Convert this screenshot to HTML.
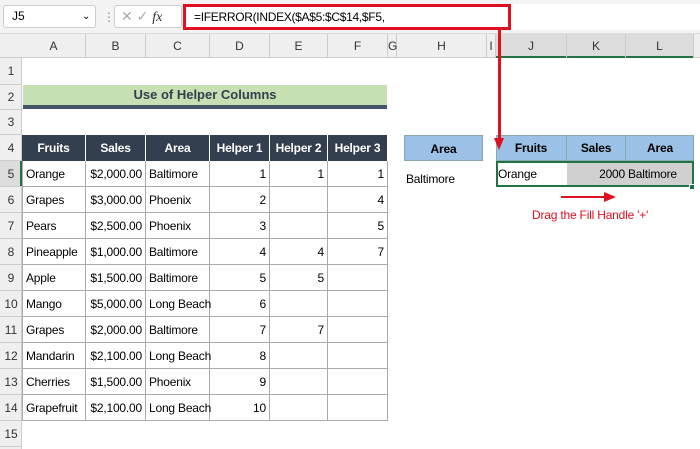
<!DOCTYPE html><html><head><style>
body{margin:0;width:700px;height:449px;overflow:hidden;background:#fff;font-family:"Liberation Sans",sans-serif;position:relative}
.a{position:absolute;box-sizing:border-box}
.t{font-size:12px;line-height:26px;white-space:nowrap;letter-spacing:-0.2px}
</style></head><body>
<div class="a" style="left:0;top:0;width:700px;height:34px;background:#f3f3f3;border-bottom:1px solid #ddd"></div>
<div class="a" style="left:3px;top:5px;width:93px;height:23px;background:#fff;border:1px solid #ccc;border-radius:3px;font-size:12px;line-height:21px;padding-left:8px">J5<span style="position:absolute;left:78px;font-size:10px">&#8964;</span></div>
<div class="a" style="left:103px;top:10px;font-size:12px;color:#888">⋮</div>
<div class="a" style="left:114px;top:5px;width:68px;height:23px;background:#fff;border:1px solid #ccc;border-radius:3px;font-size:14px;line-height:21px;color:#aaa;padding-left:6px">✕ ✓ <i style="color:#333;font-family:'Liberation Serif'">fx</i></div>
<div class="a" style="left:183px;top:4px;width:517px;height:26px;background:#fff"></div>
<div class="a" style="left:183px;top:4px;width:328px;height:26px;border:3px solid #e01020;font-size:12px;line-height:20px;padding-left:8px;letter-spacing:-0.3px">=IFERROR(INDEX($A$5:$C$14,$F5,</div>
<div class="a" style="left:0;top:34px;width:700px;height:24px;background:#efefef;border-bottom:1px solid #ccc"></div>
<div class="a" style="left:496px;top:56px;width:198px;height:2px;background:#217346"></div>
<div class="a" style="left:496px;top:34px;width:198px;height:22px;background:#dcdcdc"></div>
<div class="a" style="left:0;top:58px;width:22px;height:391px;background:#efefef;border-right:1px solid #ccc"></div>
<div class="a" style="left:0;top:161px;width:22px;height:26px;background:#dcdcdc;border-right:2px solid #217346"></div>
<div id="g"></div>
<div class="a" style="left:23px;top:85px;width:364px;height:20px;background:#c6e0b4;text-align:center;font-weight:bold;font-size:13px;line-height:20px;color:#333f4f">Use of Helper Columns</div>
<div class="a" style="left:23px;top:105px;width:364px;height:4px;background:#44546a"></div>
<div id="tb"></div>
<div class="a" style="left:404px;top:135px;width:79px;height:26px;background:#9bc2e6;border:1px solid #8aa;text-align:center;font-weight:bold" ><span class="t">Area</span></div>
<div class="a t" style="left:406px;top:166px">Baltimore</div>
<div class="a" style="left:496px;top:135px;width:198px;height:26px;background:#9bc2e6;border:1px solid #8aa"></div>
<div class="a t" style="left:496px;top:135px;width:71px;text-align:center;font-weight:bold;border-right:1px solid #8aa">Fruits</div>
<div class="a t" style="left:567px;top:135px;width:59px;text-align:center;font-weight:bold;border-right:1px solid #8aa">Sales</div>
<div class="a t" style="left:626px;top:135px;width:68px;text-align:center;font-weight:bold">Area</div>
<div class="a" style="left:567px;top:161px;width:126px;height:26px;background:#d0d0d0"></div>
<div class="a t" style="left:498px;top:161px">Orange</div>
<div class="a t" style="left:567px;top:161px;width:58px;text-align:right">2000</div>
<div class="a t" style="left:628px;top:161px">Baltimore</div>
<div class="a" style="left:496px;top:161px;width:198px;height:26px;border:2px solid #217346"></div>
<div class="a" style="left:689px;top:184px;width:6px;height:6px;background:#217346;border:1px solid #fff"></div>
<div class="a" style="left:498px;top:30px;width:3px;height:110px;background:#e01020"></div>
<div class="a" style="left:494px;top:138px;width:0;height:0;border-left:5px solid transparent;border-right:5px solid transparent;border-top:12px solid #e01020"></div>
<div class="a" style="left:561px;top:196px;width:45px;height:2px;background:#e01020"></div>
<div class="a" style="left:604px;top:192px;width:0;height:0;border-top:5px solid transparent;border-bottom:5px solid transparent;border-left:12px solid #e01020"></div>
<div class="a t" style="left:532px;top:202px;color:#e01020">Drag the Fill Handle '+'</div>
<script>
var cols=[["A",22,86],["B",86,146],["C",146,210],["D",210,270],["E",270,328],["F",328,388],["G",388,397],["H",397,487],["I",487,496],["J",496,567],["K",567,626],["L",626,694]];
var rows=[[1,58,85],[2,85,110],[3,110,135]];for(var r=4;r<=15;r++)rows.push([r,135+(r-4)*26,161+(r-4)*26]);
var h="";
cols.forEach(c=>{h+=`<div class="a" style="left:${c[1]}px;top:34px;width:${c[2]-c[1]}px;height:24px;border-right:1px solid #ccc;text-align:center;font-size:12px;line-height:24px;color:#333">${c[0]}</div>`;});
rows.forEach(r=>{h+=`<div class="a" style="left:0;top:${r[1]}px;width:22px;height:${r[2]-r[1]}px;border-bottom:1px solid #ccc;text-align:center;font-size:12px;line-height:${r[2]-r[1]}px;color:#333">${r[0]}</div>`;});
document.getElementById("g").innerHTML=h;
var d=[["Orange","$2,000.00","Baltimore",1,1,1],["Grapes","$3,000.00","Phoenix",2,"",4],["Pears","$2,500.00","Phoenix",3,"",5],["Pineapple","$1,000.00","Baltimore",4,4,7],["Apple","$1,500.00","Baltimore",5,5,""],["Mango","$5,000.00","Long Beach",6,"",""],["Grapes","$2,000.00","Baltimore",7,7,""],["Mandarin","$2,100.00","Long Beach",8,"",""],["Cherries","$1,500.00","Phoenix",9,"",""],["Grapefruit","$2,100.00","Long Beach",10,"",""]];
var hd=["Fruits","Sales","Area","Helper 1","Helper 2","Helper 3"];var t="";
for(var i=0;i<6;i++){var c=cols[i];t+=`<div class="a t" style="left:${c[1]}px;top:135px;width:${c[2]-c[1]}px;height:26px;background:#333f4f;color:#fff;font-weight:bold;text-align:center;border-right:1px solid #fff">${hd[i]}</div>`;}
d.forEach((row,j)=>{var y=161+j*26;for(var i=0;i<6;i++){var c=cols[i];var al=i==1||i>=3?"right":"left";t+=`<div class="a t" style="left:${c[1]}px;top:${y}px;width:${c[2]-c[1]}px;height:26px;border-right:1px solid #aaa;border-bottom:1px solid #aaa;text-align:${al};padding:0 3px;${i==0?'border-left:1px solid #aaa;':''}">${row[i]}</div>`;}});
document.getElementById("tb").innerHTML=t;
</script>
</body></html>
